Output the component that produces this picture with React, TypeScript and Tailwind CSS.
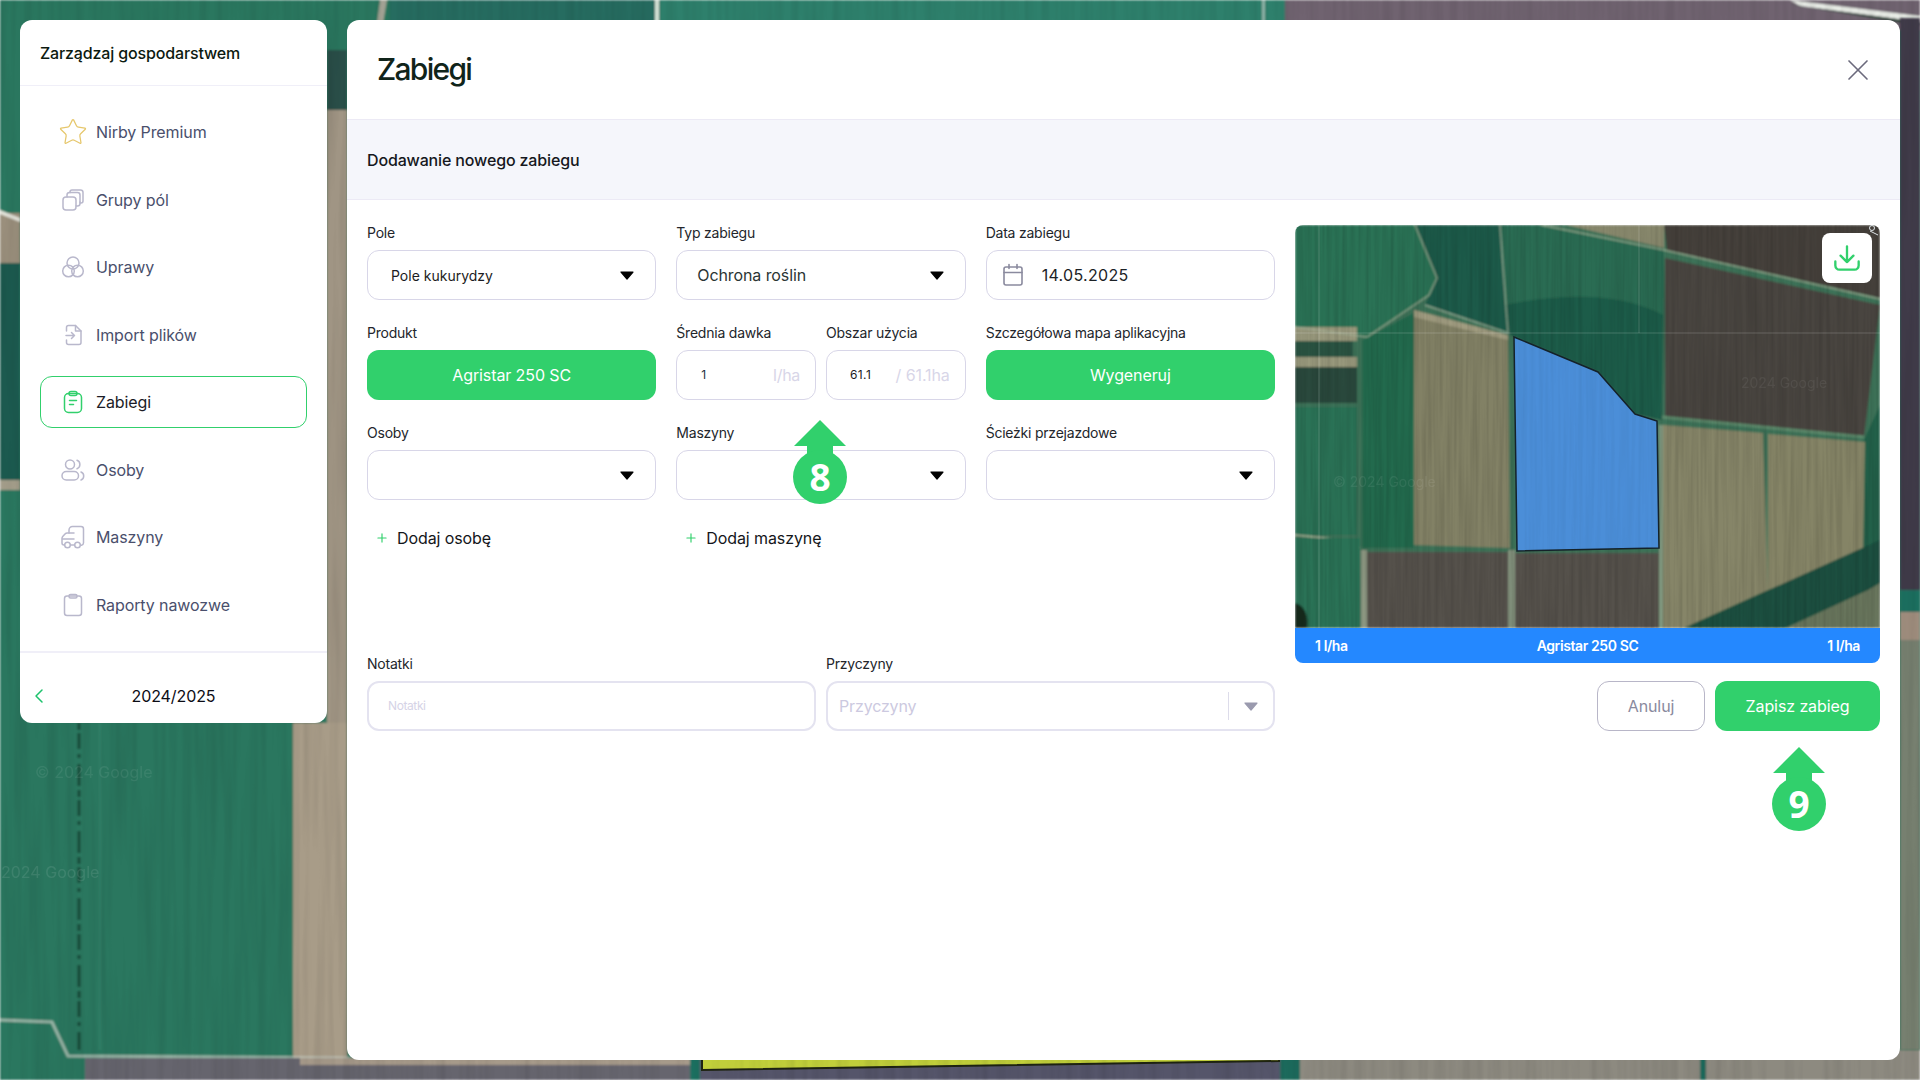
import type { ReactNode } from "react";
import { Star, X, Plus, ChevronLeft } from "lucide-react";

const font = { fontFamily: "Inter, 'Noto Sans', sans-serif" };

// ikony menu
function Ico({ children, color = "#b9b8cc" }: { children: ReactNode; color?: string }) {
  return (
    <svg viewBox="0 0 24 24" width="24" height="24" fill="none" stroke={color} strokeWidth="1.5" strokeLinecap="round" strokeLinejoin="round" className="shrink-0">
      {children}
    </svg>
  );
}

const menu: { label: string; icon: ReactNode; active?: boolean }[] = [
  { label: "Nirby Premium", icon: <Star size={30} strokeWidth={1} color="#e6c76c" className="shrink-0 -mx-[3px]" /> },
  {
    label: "Grupy pól",
    icon: (
      <Ico>
        <rect x="2" y="9" width="13" height="13" rx="3" />
        <path d="M6 9V7a2.5 2.5 0 0 1 2.5-2.5H9M15 18h1.5A2.5 2.5 0 0 0 19 15.500V14" />
        <path d="M9 4.500V4a2 2 0 0 1 2-2h8.500A2.500 2.500 0 0 1 22 4.500V13a2 2 0 0 1-2 2h-1" />
        <path d="M9 4.500h7.500A2.500 2.500 0 0 1 19 7v7" />
      </Ico>
    ),
  },
  {
    label: "Uprawy",
    icon: (
      <Ico>
        <circle cx="12" cy="8" r="6" />
        <circle cx="7.500" cy="16" r="5.800" />
        <circle cx="16.500" cy="16" r="5.800" />
      </Ico>
    ),
  },
  {
    label: "Import plików",
    icon: (
      <Ico>
        <path d="M5.500 8V4.500A2 2 0 0 1 7.500 2.500h7l5.500 5.500v11.500a2 2 0 0 1-2 2H7.500a2 2 0 0 1-2-2V17" />
        <path d="M14.500 2.500V8H20" />
        <path d="M5 12.500h8.500M10.500 9.500l3 3-3 3" />
      </Ico>
    ),
  },
  {
    label: "Zabiegi",
    active: true,
    icon: (
      <Ico color="#31d06c">
        <rect x="3.500" y="3.500" width="17" height="19" rx="4" />
        <rect x="8" y="1.500" width="8" height="4" rx="2" />
        <path d="M8.500 10.500h7M8.500 14.500h4" />
      </Ico>
    ),
  },
  {
    label: "Osoby",
    icon: (
      <Ico>
        <circle cx="9" cy="6.500" r="4.500" />
        <rect x="1" y="13.500" width="16.500" height="8.500" rx="4.250" />
        <path d="M16 2.300a4.500 4.500 0 0 1 0 8.400M20 14a4.300 4.300 0 0 1 0 8" />
      </Ico>
    ),
  },
  {
    label: "Maszyny",
    icon: (
      <Ico>
        <path d="M8 8V5a3.500 3.500 0 0 1 3.500-3.500H20A2.500 2.500 0 0 1 22.500 4v14a2.500 2.500 0 0 1-2 2.300" />
        <path d="M3.500 20H3a2 2 0 0 1-2-2v-4.500a3 3 0 0 1 .7-2L4 9a3 3 0 0 1 2.300-1H13" />
        <path d="M1.500 14H13" />
        <circle cx="6.500" cy="20" r="2.800" />
        <circle cx="16.500" cy="20" r="2.800" />
        <path d="M9.500 20h4" />
      </Ico>
    ),
  },
  {
    label: "Raporty nawozwe",
    icon: (
      <Ico>
        <rect x="3.500" y="3" width="17" height="19.500" rx="2.500" />
        <rect x="8" y="1.500" width="8" height="3.500" rx="1.500" />
      </Ico>
    ),
  },
];

// strzałka z numerem kroku
function StepMarker({ n, className }: { n: string; className: string }) {
  return (
    <div className={`absolute w-[54px] h-[84px] ${className}`}>
      <svg viewBox="0 0 54 84" width="54" height="84" fill="#31d06c">
        <path d="M27 0 L53 26 H40 V34 H14 V26 H1 Z" />
        <circle cx="27" cy="57" r="27" />
      </svg>
      <span
        className="absolute left-0 right-0 top-[30px] text-center text-[37px] leading-[54px] font-bold text-white"
        style={{ fontFamily: "'Open Sans', sans-serif" }}
      >
        {n}
      </span>
    </div>
  );
}

function Caret({ color = "#000" }: { color?: string }) {
  return (
    <svg viewBox="0 0 14 9" width="14" height="9" className="shrink-0">
      <path d="M1 1 H13 L7 8 Z" fill={color} stroke={color} strokeWidth="1.200" strokeLinejoin="round" />
    </svg>
  );
}

function Label({ children }: { children: ReactNode }) {
  return <div className="h-[18px] mt-px mb-2 text-[14px] leading-[18px] tracking-[-0.22px] text-[#23262b]">{children}</div>;
}

function Select({ text, small }: { text?: string; small?: boolean }) {
  return (
    <div className={`h-[50px] flex items-center justify-between border border-[#d8d6e8] rounded-xl pr-[21px] ${small ? "pl-[23px]" : "pl-[20px]"}`}>
      <span className={small ? "text-[14px] text-[#1c1c22]" : "text-[16px] tracking-[-0.1px] text-[#2b3534]"}>{text}</span>
      <Caret />
    </div>
  );
}

function GreenBtn({ text }: { text: string }) {
  return <div className="h-[50px] flex items-center justify-center rounded-xl bg-[#31d06c] text-white text-[16px] tracking-[-0.1px]">{text}</div>;
}

// tło mapy (zdjęcie satelitarne rysowane kształtami)
function Background() {
  return (
    <svg className="absolute inset-0" width="1920" height="1080" viewBox="0 0 1920 1080">
      <defs>
        <filter id="streak" x="0" y="0" width="100%" height="100%">
          <feTurbulence type="fractalNoise" baseFrequency="0.12 0.006" numOctaves="2" seed="4" />
          <feColorMatrix values="0 0 0 0 0  0 0 0 0 0  0 0 0 0 0  1.400 0 0 0 -0.500" />
          <feGaussianBlur stdDeviation="0.600" />
        </filter>
        <filter id="soft"><feGaussianBlur stdDeviation="1" /></filter>
      </defs>
      <g filter="url(#soft)">
        <rect width="1920" height="1080" fill="#29775f" />
        <rect x="390" width="270" height="30" fill="#256c61" />
        <rect x="660" width="625" height="30" fill="#2f806c" />
        <rect x="1285" width="635" height="30" fill="#6f6470" />
        <path d="M1790 0 L1920 16 V22 L1800 6 Z" fill="#e8ece6" />
        <path d="M1800 6 L1920 22 V26 L1790 4 Z" fill="#2c4438" />
        <path d="M380 0 H387 L382 30 H376 Z" fill="#a6a596" />
        <rect x="655" width="4" height="30" fill="#d6e4d8" />
        <rect x="1262" width="3" height="30" fill="#8fb3a8" />
        {/* lewa strona */}
        <rect y="213" width="20" height="50" fill="#9a8f7c" />
        <path d="M0 210 L20 218 V222 L0 214 Z" fill="#e3e3da" />
        <rect y="263" width="20" height="220" fill="#1f5a50" />
        <rect y="480" width="20" height="10" fill="#a39d8a" />
        <rect x="327" y="50" width="20" height="60" fill="#2c4f48" />
        <rect x="327" y="110" width="20" height="950" fill="#a09584" />
        {/* pas pod panelem */}
        <rect x="293" y="723" width="54" height="335" fill="#a89c88" />
        <path d="M79 723 V1050" stroke="#14352c" strokeWidth="3" strokeDasharray="7 3 16 5 4 6 22 4" strokeOpacity="0.75" />
        <path d="M100 723 V1050" stroke="#3c8a76" strokeWidth="1.500" strokeOpacity="0.6" />
        <path d="M0 1020 L52 1022 L68 1056 L350 1058" stroke="#c8cfc4" strokeWidth="3" strokeOpacity="0.7" fill="none" />
        {/* dół */}
        <rect x="85" y="1058" width="605" height="22" fill="#66656e" />
        <rect x="300" y="1058" width="390" height="7" fill="#a69a8a" />
        <rect x="690" y="1050" width="12" height="30" fill="#1f7060" />
        <rect x="700" y="1050" width="580" height="30" fill="#55546a" />
        <rect x="1280" y="1050" width="20" height="30" fill="#1c6a5c" />
        <rect x="1300" y="1050" width="620" height="30" fill="#8d8a80" />
        <rect x="1700" y="1050" width="6" height="30" fill="#1c6a5c" />
      </g>
      <path d="M702 1050 H1279 V1061 L702 1070 Z" fill="#c1cf3b" stroke="#1f2412" strokeWidth="2" />
      {/* prawa strona */}
      <g filter="url(#soft)">
        <rect x="1900" y="18" width="20" height="572" fill="#3f3b4a" />
        <rect x="1900" y="590" width="20" height="22" fill="#1f7060" />
        <rect x="1900" y="612" width="20" height="28" fill="#a08e7e" />
        <rect x="1900" y="640" width="20" height="410" fill="#77806f" />
      </g>
      <rect width="1920" height="1080" filter="url(#streak)" opacity="0.1" />
      <text x="35" y="778" fill="#ffffff" opacity="0.07" fontSize="16" style={font}>© 2024 Google</text>
      <text x="1" y="878" fill="#ffffff" opacity="0.09" fontSize="16" style={font}>2024 Google</text>
    </svg>
  );
}

// podgląd pola z mapą aplikacyjną
function FieldMap() {
  return (
    <svg viewBox="0 0 585 403" width="585" height="403" className="block">
      <defs>
        <filter id="mapStreak" x="0" y="0" width="100%" height="100%">
          <feTurbulence type="fractalNoise" baseFrequency="0.25 0.008" numOctaves="2" seed="9" />
          <feColorMatrix values="0 0 0 0 0  0 0 0 0 0  0 0 0 0 0  1.500 0 0 0 -0.500" />
          <feGaussianBlur stdDeviation="0.500" />
        </filter>
        <filter id="mapSoft"><feGaussianBlur stdDeviation="0.900" /></filter>
        <clipPath id="plot"><path d="M219 112 L303 147 L340 189 L362 196 L364 323 L222 326 Z" /></clipPath>
      </defs>
      <g filter="url(#mapSoft)">
        <rect width="585" height="403" fill="#3d7258" />
        <path d="M0 0 H120 L142 53 L134 70 L72 112 L0 102 Z" fill="#2b7254" />
        <path d="M120 0 H205 L213 108 L130 80 L142 53 Z" fill="#1f5a48" />
        <path d="M205 0 H246 L369 25 L367 195 L340 189 L303 147 L219 112 L213 108 Z" fill="#1f5c49" />
        <path d="M207 0 H246 L369 25 L368 90 C320 65 260 70 210 80 Z" fill="#296c52" />
        <path d="M271 0 H369 V23 Z" fill="#8a8a6e" />
        <path d="M369 0 H585 V73 L372 25 Z" fill="#45403a" />
        <path d="M370 33 L585 80 L569 212 L370 193 Z" fill="#4a453f" />
        <path d="M585 180 L569 215 V330 H585 Z" fill="#206049" />
        <path d="M368 200 L468 208 L473 365 L389 403 H368 Z" fill="#868568" />
        <path d="M473 209 L570 217 L568 330 L473 365 Z" fill="#858466" />
        <path d="M389 403 L585 315 V360 L490 403 Z" fill="#1c4f40" />
        <path d="M491 403 L573 365 L585 358 V403 Z" fill="#67755c" />
        <path d="M119 85 L213 110 L215 323 L119 320 Z" fill="#828165" />
        <path d="M119 85 L213 110 L213 115 L119 92 Z" fill="#a09c80" />
        <path d="M67 115 L119 88 V323 H67 Z" fill="#216a4e" />
        <rect y="102" width="62" height="14" fill="#98987c" />
        <rect y="116" width="58" height="16" fill="#2a5242" />
        <rect y="132" width="62" height="10" fill="#98987c" />
        <rect y="142" width="62" height="36" fill="#2b4a3c" />
        <rect y="182" width="62" height="128" fill="#2b7256" />
        <path d="M0 310 L60 316 L65 323" stroke="#a9b59a" strokeWidth="1.500" fill="none" />
        <rect y="313" width="65" height="90" fill="#2b7256" />
        <path d="M0 378 C10 380 14 392 12 403 H0 Z" fill="#12291f" />
        <rect x="66" y="325" width="6" height="78" fill="#8f9a84" />
        <rect x="72" y="327" width="141" height="76" fill="#55514c" />
        <rect x="213" y="325" width="7" height="78" fill="#84937e" />
        <rect x="220" y="328" width="144" height="75" fill="#55514c" />
        <rect x="364" y="200" width="4" height="203" fill="#7f987f" />
        <path d="M120 0 L142 53 L134 70 L72 112 L0 102" stroke="#a8b69c" strokeWidth="1.500" strokeOpacity="0.75" fill="none" />
        <path d="M130 80 L213 108 L205 0" stroke="#a9bca4" strokeWidth="1.500" strokeOpacity="0.75" fill="none" />
        <path d="M246 0 L369 25 L585 74" stroke="#a9b89c" strokeWidth="1.500" strokeOpacity="0.75" fill="none" />
        <path d="M367 192 L569 212" stroke="#5d8a6c" strokeWidth="3" fill="none" />
      </g>
      <rect width="585" height="403" filter="url(#mapStreak)" opacity="0.14" />
      <path d="M219 112 L303 147 L340 189 L362 196 L364 323 L222 326 Z" fill="#4b8ed8" />
      <rect x="219" y="112" width="146" height="214" clipPath="url(#plot)" filter="url(#mapStreak)" opacity="0.05" />
      <path d="M219 112 L303 147 L340 189 L362 196 L364 323 L222 326 Z" fill="none" stroke="#14222a" strokeWidth="1.500" />
      <path d="M0 108 H585 M24 0 V403 M344 0 V108" stroke="#ffffff" strokeOpacity="0.18" strokeWidth="1" />
      <circle cx="577" cy="3" r="2.500" fill="none" stroke="#dfe6ea" strokeWidth="1" />
      <path d="M575 6 L583 10" stroke="#dfe6ea" strokeWidth="1" />
      <text x="38" y="262" fill="#ffffff" opacity="0.07" fontSize="14" style={font}>© 2024 Google</text>
      <text x="446" y="163" fill="#ffffff" opacity="0.06" fontSize="14" style={font}>2024 Google</text>
    </svg>
  );
}

export default function App() {
  return (
    <div className="relative w-[1920px] h-[1080px] overflow-hidden" style={font}>
      <Background />

      <div className="relative flex items-start gap-5 p-5">
        {/* SIDEBAR */}
        <aside className="w-[307px] h-[703px] shrink-0 bg-white rounded-xl flex flex-col">
          <div className="h-[66px] flex items-center pl-5 border-b border-[#f0eff8] text-[16px] font-medium tracking-[-0.15px] text-[#0c1a10]">
            Zarządzaj gospodarstwem
          </div>
          <nav className="flex flex-col gap-[15.5px] pt-5 px-5 flex-1">
            {menu.map((m) => (
              <div
                key={m.label}
                className={`h-[52px] flex items-center gap-[11px] pl-5 rounded-xl text-[16px] tracking-[-0.1px] border ${
                  m.active ? "border-[#31d06c] text-[#1b1c27]" : "border-transparent text-[#4a4f6c]"
                }`}
              >
                {m.icon}
                {m.label}
              </div>
            ))}
          </nav>
          <div className="h-[72px] pt-[15px] border-t-2 border-[#f0eff8] grid grid-cols-[1fr_auto_1fr] items-center">
            <ChevronLeft size={24} strokeWidth={1.500} color="#1cc26c" className="ml-[7px]" />
            <span className="text-[16px] tracking-[-0.1px] text-[#0c0c14]">2024/2025</span>
            <span />
          </div>
        </aside>

        {/* PANEL */}
        <main className="w-[1553px] h-[1040px] bg-white rounded-xl overflow-hidden">
          <div className="h-[99px] flex items-center justify-between pl-[30px] pr-[24px]">
            <h1 className="text-[30px] font-medium tracking-[-1.7px] text-[#10241a]">Zabiegi</h1>
            <X size={36} strokeWidth={1.100} color="#6b6a7c" />
          </div>
          <div className="h-[81px] flex items-center pl-5 bg-[#f5f6fb] border-y border-[#eceaf5] text-[16px] font-medium tracking-[-0.15px] text-[#16181d]">
            Dodawanie nowego zabiegu
          </div>

          <div className="flex gap-5 px-5">
            {/* FORM */}
            <div className="w-[908px] pt-[23px]">
              <div className="grid grid-cols-3 gap-x-5 gap-y-[23px]">
                <div>
                  <Label>Pole</Label>
                  <Select text="Pole kukurydzy" small />
                </div>
                <div>
                  <Label>Typ zabiegu</Label>
                  <Select text="Ochrona roślin" />
                </div>
                <div>
                  <Label>Data zabiegu</Label>
                  <div className="h-[50px] flex items-center gap-[17px] pl-[14px] border border-[#d8d6e8] rounded-xl text-[16px] tracking-[0.3px] text-[#1c2226]">
                    <svg viewBox="0 0 24 24" width="24" height="24" fill="none" stroke="#8a8a9e" strokeWidth="1.600" strokeLinecap="round">
                      <rect x="3" y="4" width="18" height="18" rx="2" />
                      <path d="M3 9.500h18M8 1.500v4M16 1.500v4" />
                    </svg>
                    14.05.2025
                  </div>
                </div>

                <div>
                  <Label>Produkt</Label>
                  <GreenBtn text="Agristar 250 SC" />
                </div>
                <div className="flex gap-[10px]">
                  <div className="flex-1">
                    <Label>Średnia dawka</Label>
                    <div className="h-[50px] flex items-center justify-between pl-6 pr-[15px] border border-[#d8d6e8] rounded-xl">
                      <span className="text-[12px] text-[#1b3040]">1</span>
                      <span className="text-[16px] tracking-[-0.3px] text-[#d8d6e8]">l/ha</span>
                    </div>
                  </div>
                  <div className="flex-1">
                    <Label>Obszar użycia</Label>
                    <div className="h-[50px] flex items-center justify-between pl-[23px] pr-[15px] border border-[#d8d6e8] rounded-xl">
                      <span className="text-[12px] tracking-[0.4px] text-[#1c1c22]">61.1</span>
                      <span className="text-[16px] tracking-[-0.1px] text-[#d8d6e8]">/ 61.1ha</span>
                    </div>
                  </div>
                </div>
                <div>
                  <Label>Szczegółowa mapa aplikacyjna</Label>
                  <GreenBtn text="Wygeneruj" />
                </div>

                <div>
                  <Label>Osoby</Label>
                  <Select />
                </div>
                <div>
                  <Label>Maszyny</Label>
                  <Select />
                </div>
                <div>
                  <Label>Ścieżki przejazdowe</Label>
                  <Select />
                </div>
              </div>

              <div className="grid grid-cols-3 gap-x-5 mt-[26px] h-6">
                <div className="flex items-center gap-[8px] pl-[8px] text-[16px] tracking-[-0.1px] text-[#14161a]">
                  <Plus size={14} strokeWidth={2} color="#31d06c" />
                  Dodaj osobę
                </div>
                <div className="flex items-center gap-[8px] pl-[8px] text-[16px] tracking-[-0.1px] text-[#14161a]">
                  <Plus size={14} strokeWidth={2} color="#31d06c" />
                  Dodaj maszynę
                </div>
              </div>

              <div className="grid grid-cols-2 gap-x-[10px] mt-[104px]">
                <div>
                  <Label>Notatki</Label>
                  <div className="h-[50px] flex items-center pl-[19px] border-2 border-[#e4e3f0] rounded-xl text-[12px] tracking-[-0.4px] text-[#d5d3e6]">
                    Notatki
                  </div>
                </div>
                <div>
                  <Label>Przyczyny</Label>
                  <div className="h-[50px] flex items-center border-2 border-[#e4e3f0] rounded-xl pl-[11px] text-[16px] tracking-[-0.15px] text-[#ccc9e0]">
                    <span className="flex-1">Przyczyny</span>
                    <span className="w-px h-7 bg-[#dddcea]" />
                    <span className="w-[44px] flex justify-center">
                      <Caret color="#9a9aae" />
                    </span>
                  </div>
                </div>
              </div>
            </div>

            {/* MAPA */}
            <div className="w-[585px] pt-[25px]">
              <div className="relative rounded-lg overflow-hidden">
                <FieldMap />
                <div className="absolute top-2 right-2 w-[50px] h-[50px] bg-white rounded-lg flex items-center justify-center">
                  <svg viewBox="0 0 24 24" width="28" height="28" fill="none" stroke="#31d06c" strokeWidth="2" strokeLinecap="round" strokeLinejoin="round">
                    <path d="M12 2v13.500M6.500 10l5.500 5.500 5.500-5.500M2 15v3.500A3.500 3.500 0 0 0 5.500 22h13a3.500 3.500 0 0 0 3.500-3.500V15" />
                  </svg>
                </div>
                <div className="h-[35px] flex items-center justify-between px-5 bg-[#2488ff] text-white text-[14px] font-semibold tracking-[-0.4px]">
                  <span>1 l/ha</span>
                  <span>Agristar 250 SC</span>
                  <span>1 l/ha</span>
                </div>
              </div>
              <div className="flex justify-end gap-[10px] mt-[18px]">
                <div className="w-[108px] h-[50px] flex items-center justify-center border border-[#b8b6c8] rounded-xl text-[16px] tracking-[-0.1px] text-[#8a8a9e]">
                  Anuluj
                </div>
                <div className="w-[165px] h-[50px] flex items-center justify-center rounded-xl bg-[#31d06c] text-white text-[16px] tracking-[-0.1px]">
                  Zapisz zabieg
                </div>
              </div>
            </div>
          </div>
        </main>
      </div>

      {/* ZNACZNIKI KROKÓW */}
      <StepMarker n="8" className="left-[793px] top-[420px]" />
      <StepMarker n="9" className="left-[1772px] top-[747px]" />
    </div>
  );
}
